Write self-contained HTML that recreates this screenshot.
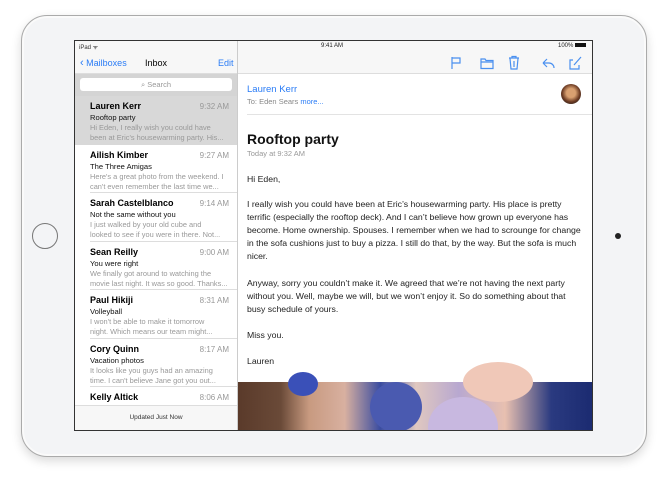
<!DOCTYPE html>
<html><head><meta charset="utf-8"><style>
*{margin:0;padding:0;box-sizing:border-box}
body{width:670px;height:484px;background:#fff;position:relative;overflow:hidden;font-family:"Liberation Sans",sans-serif}
.dev{position:absolute;left:21px;top:15px;width:626px;height:442px;border-radius:26px;background:#f3f4f6;border:1.5px solid #aaa;box-shadow:0 4px 10px rgba(0,0,0,.15),inset 0 0 0 2px #fafafa}
.scr{position:absolute;left:74px;top:40px;width:519px;height:391px;background:#fff;border:1.5px solid #333;overflow:hidden}
.a{position:absolute;white-space:nowrap}
.side{position:absolute;left:0;top:0;width:163px;height:100%;border-right:1px solid #ccc}
.row{position:absolute;left:0;width:162px;height:48.5px}
.row .n{position:absolute;left:15px;top:5px;font-size:9px;font-weight:bold;color:#000}
.row .t{position:absolute;right:8px;top:6px;font-size:8px;color:#999}
.row .s{position:absolute;left:15px;top:17px;font-size:7.6px;color:#111}
.row .p{position:absolute;left:15px;top:27px;font-size:7.4px;color:#999;line-height:10px}
.row .ln{position:absolute;left:15px;right:0;bottom:0;border-bottom:1px solid #ddd}
.body{font-size:8.7px;color:#222;left:172px;line-height:13px}
.blue{color:#2a7cf6}
</style></head><body>
<div class="dev"></div>
<div class="a" style="left:32px;top:223px;width:26px;height:26px;border-radius:50%;border:1.5px solid #777"></div>
<div class="a" style="left:615px;top:233px;width:6px;height:6px;border-radius:50%;background:#222"></div>
<div class="scr">
 <div class="a" style="left:0;top:0;width:519px;height:33px;background:#f7f7f7;border-bottom:1px solid #ddd"></div>
 <div class="a" style="left:4px;top:2px;font-size:6px;color:#333">iPad ᯤ</div>
 <div class="a" style="left:246px;top:2px;font-size:6px;color:#222">9:41 AM</div>
 <div class="a" style="left:483px;top:2px;font-size:6px;color:#222">100% <span style="display:inline-block;width:11px;height:4px;background:#111;vertical-align:middle"></span></div>
 <div class="side">
  <div class="a" style="left:0;top:33px;width:162px;height:22px;background:#d4d4d4"></div>
  <div class="a" style="left:5px;top:37px;width:152px;height:13px;background:#fff;border-radius:3px;font-size:7.5px;color:#999;text-align:center;line-height:13px">⌕ Search</div>
  <div class="a blue" style="left:5px;top:16px;font-size:9px"><b style="font-size:11px;font-weight:normal">‹</b> Mailboxes</div>
  <div class="a" style="left:70px;top:17px;font-size:9px;color:#000">Inbox</div>
  <div class="a blue" style="left:143px;top:17px;font-size:9px">Edit</div>
  <div class="row" style="top:55px;background:#d8d8d8"><div class="n">Lauren Kerr</div><div class="t">9:32 AM</div><div class="s">Rooftop party</div><div class="p">Hi Eden, I really wish you could have<br>been at Eric's housewarming party. His...</div></div>
  <div class="row" style="top:103.5px"><div class="n">Ailish Kimber</div><div class="t">9:27 AM</div><div class="s">The Three Amigas</div><div class="p">Here's a great photo from the weekend. I<br>can't even remember the last time we...</div><div class="ln"></div></div>
  <div class="row" style="top:152px"><div class="n">Sarah Castelblanco</div><div class="t">9:14 AM</div><div class="s">Not the same without you</div><div class="p">I just walked by your old cube and<br>looked to see if you were in there. Not...</div><div class="ln"></div></div>
  <div class="row" style="top:200.5px"><div class="n">Sean Reilly</div><div class="t">9:00 AM</div><div class="s">You were right</div><div class="p">We finally got around to watching the<br>movie last night. It was so good. Thanks...</div><div class="ln"></div></div>
  <div class="row" style="top:249px"><div class="n">Paul Hikiji</div><div class="t">8:31 AM</div><div class="s">Volleyball</div><div class="p">I won't be able to make it tomorrow<br>night. Which means our team might...</div><div class="ln"></div></div>
  <div class="row" style="top:297.5px"><div class="n">Cory Quinn</div><div class="t">8:17 AM</div><div class="s">Vacation photos</div><div class="p">It looks like you guys had an amazing<br>time. I can't believe Jane got you out...</div><div class="ln"></div></div>
  <div class="row" style="top:346px"><div class="n">Kelly Altick</div><div class="t">8:06 AM</div><div class="s">Lost and found</div></div>
  <div class="a" style="left:0;top:364px;width:162px;height:27px;background:#f7f7f7;border-top:1px solid #ddd;font-size:6.5px;color:#333;text-align:center;line-height:24px">Updated Just Now</div>
 </div>
 <svg class="a" style="left:370px;top:14px" width="145" height="16" fill="none" stroke="#4a90f0" stroke-width="1.2">
  <path d="M7 2v12M7 3h8v5H7"/>
  <path d="M36 4h4l1 1.5h7v8H36z M36 7h12"/>
  <path d="M64 3h10M67 3V1.5h4V3M65 3.5l1 10.5h6l1-10.5M69 6v6"/>
  <path d="M98 8l4-4M98 8l4 4M98 8h6a5 5 0 0 1 5 5"/>
  <path d="M128 5h-3v9h9v-4M129 10l7-8"/>
 </svg>
 <div class="a blue" style="left:172px;top:43px;font-size:9.5px">Lauren Kerr</div>
 <div class="a" style="left:172px;top:56px;font-size:7.5px;color:#888">To: Eden Sears <span class="blue">more...</span></div>
 <div class="a" style="left:486px;top:43px;width:20px;height:20px;border-radius:50%;background:radial-gradient(circle at 50% 45%,#d9a070 30%,#6b3a22 60%,#222 90%)"></div>
 <div class="a" style="left:172px;top:73px;width:347px;border-top:1px solid #e3e3e3"></div>
 <div class="a" style="left:172px;top:90px;font-size:14px;font-weight:bold;color:#111">Rooftop party</div>
 <div class="a" style="left:172px;top:108px;font-size:7.5px;color:#999">Today at 9:32 AM</div>
 <div class="a body" style="top:132px">Hi Eden,</div>
 <div class="a body" style="top:157px">I really wish you could have been at Eric’s housewarming party. His place is pretty<br>terrific (especially the rooftop deck). And I can’t believe how grown up everyone has<br>become. Home ownership. Spouses. I remember when we had to scrounge for change<br>in the sofa cushions just to buy a pizza. I still do that, by the way. But the sofa is much<br>nicer.</div>
 <div class="a body" style="top:236px">Anyway, sorry you couldn’t make it. We agreed that we’re not having the next party<br>without you. Well, maybe we will, but we won’t enjoy it. So do something about that<br>busy schedule of yours.</div>
 <div class="a body" style="top:288px">Miss you.</div>
 <div class="a body" style="top:314px">Lauren</div>
 <div class="a" style="left:163px;top:341px;width:356px;height:50px;background:linear-gradient(90deg,#5a3a2a 0%,#6a4a38 12%,#c89a80 20%,#d8b0a0 30%,#3a4ca0 40%,#e0c8c0 50%,#b8a8d0 62%,#e8c0b0 75%,#2a3a80 88%,#1a2a70 100%)">
  <div class="a" style="left:50px;top:-10px;width:30px;height:24px;border-radius:50%;background:#3a50b8"></div>
  <div class="a" style="left:132px;top:0;width:52px;height:50px;border-radius:50%;background:#4a5ab0"></div>
  <div class="a" style="left:190px;top:15px;width:70px;height:60px;border-radius:50%;background:#c8b8e0"></div>
  <div class="a" style="left:225px;top:-20px;width:70px;height:40px;border-radius:50%;background:#f0c8b8"></div>
 </div>
</div>
</body></html>
